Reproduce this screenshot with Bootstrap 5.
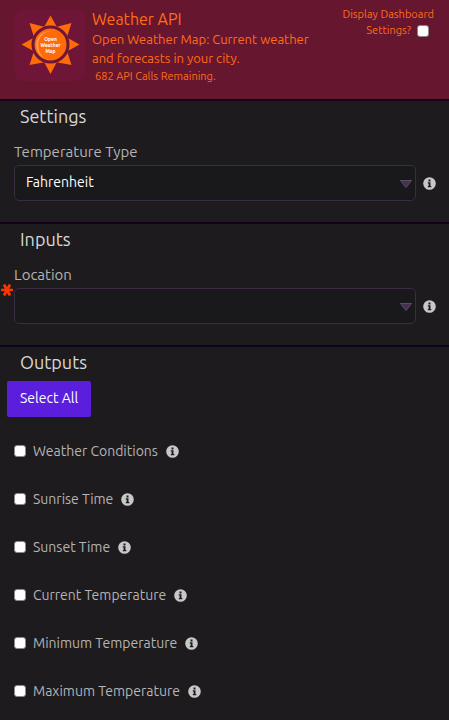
<!DOCTYPE html>
<html lang="en" data-bs-theme="dark">
<head>
<meta charset="utf-8">
<meta name="viewport" content="width=device-width, initial-scale=1">
<title>Weather API</title>
<link href="https://cdn.jsdelivr.net/npm/bootstrap@5.3.0/dist/css/bootstrap.min.css" rel="stylesheet">
<style>
body { font-family: Ubuntu, "Noto Sans", sans-serif; font-size: 14px; line-height: 20px; background: #1e1b1e; color: #b4b4b4; }
.api-head { background: #67162f; color: #ff6d14; padding: 9px 15px 14px 14px; column-gap: 7px; }
.api-logo { width: 71px; height: 71px; flex: none; border-radius: 9px; background: #6f1537; margin-top: 1px; }
.api-title { font-size: 16px; line-height: 20px; color: inherit; }
.api-desc { font-size: 13px; line-height: 19px; padding: 1px 16px 0 0; }
.api-calls { font-size: 11px; line-height: 17px; padding-left: 3px; }
.dash-toggle { font-size: 11px; line-height: 16px; margin-top: -3px; }
.dash-toggle .tick.form-check-input { margin: 0 5px 0 6px; }
.panel { border-top: 2px solid #12021c; }
.panel-title { font-size: 18px; line-height: 24px; color: #d8d8d8; padding: 3px 20px 0; }
.field { padding: 14px 14px 21px; }
.field-label { font-size: 15px; line-height: 20px; margin-bottom: 3px; }
.field-select { height: 36px; font-size: 14px; line-height: 20px; color: #fff; background-color: #19181a; border: 1px solid #3a2c42; border-radius: 5px; padding: 5px 28px 7px 11px;
  background-image: url("data:image/svg+xml,%3Csvg xmlns='http://www.w3.org/2000/svg' viewBox='0 0 12 8'%3E%3Cpath d='M.5.5h11L6 7.5z' fill='%23433052' stroke='%23706078' stroke-width='.7'/%3E%3C/svg%3E"); background-size: 12px 8px; background-position: right 3px top 14px; }
.field-row { column-gap: 7px; margin-right: -1px; }
.required-mark { left: 1px; top: 33px; width: 12px; height: 12px; }
.tick.form-check-input { width: 12px; height: 12px; margin: 0; flex: none; background-color: #fff; border: 1px solid #8b8789; border-radius: 3px; }
.tick.form-check-input:checked { background-color: #5a1edc; }
.info-dot { width: 13px; height: 13px; flex: none; }
.btn-all { font-size: 14px; line-height: 20px; padding: 7px 13px 9px; border-radius: 2px; background: #5a1edc; color: #fff; margin: 7px 7px 10px; }
.btn-all:hover { background: #6b34e4; color: #fff; }
.output-item { height: 48px; padding: 0 14px; column-gap: 7px; }
.output-item label { font-size: 14px; line-height: 20px; padding-right: 1px; }
</style>
<script src="https://cdn.jsdelivr.net/npm/bootstrap@5.3.0/dist/js/bootstrap.bundle.min.js"></script>
</head>
<body>
<svg class="d-none" aria-hidden="true">
  <symbol id="info" viewBox="0 0 13 13"><circle cx="6.5" cy="6.5" r="6.300" fill="#c8c8c8"/><path d="M5.500 2.500h2v2h-2zM4.800 5.300h2.700v3.800h.8v1.200H4.800V9.100h.8V6.500h-.8z" fill="#1e1b1e"/></symbol>
</svg>
<header class="api-head d-flex align-items-start">
  <svg class="api-logo" viewBox="0 0 71 71" role="img" aria-label="Open Weather Map">
    <g fill="#ff6b08">
      <path d="M36.500 5.500L44.500 20h-16z"/><path d="M36.500 64l8-15h-16z"/><path d="M7.500 34.500L22 26.500v16z"/><path d="M65.500 34.500L51 26.500v16z"/>
      <path d="M15.500 13L31 17 20 27z"/><path d="M57.500 13L42 17l11 10z"/><path d="M15.500 55L20 41l12 11z"/><path d="M57.500 55L53 41 41 52z"/>
    </g>
    <circle cx="36.500" cy="34.500" r="17.500" fill="#ff6b08" stroke="#6f1537" stroke-width="3"/>
    <path d="M29 47.500A15 15 0 0 1 24 28Q28 21 37 21Q28 22 25 30Q22 39 29 47.500" fill="#ff9c5c"/>
    <g fill="#fff" font-family="Ubuntu, Noto Sans, sans-serif" font-weight="700" font-size="5" text-anchor="middle"><text x="36.500" y="31">Open</text><text x="36.500" y="36.500">Weather</text><text x="36.500" y="42.500">Map</text></g>
  </svg>
  <div class="flex-grow-1">
    <h1 class="api-title fw-normal mb-0">Weather API</h1>
    <p class="api-desc mb-0">Open Weather Map: Current weather and forecasts in your city.</p>
    <p class="api-calls mb-0">682 API Calls Remaining.</p>
  </div>
  <div class="dash-toggle text-end flex-shrink-0">
    <label class="d-inline" for="dash">Display Dashboard<br>Settings?</label><input class="tick form-check-input align-middle" type="checkbox" id="dash">
  </div>
</header>
<main>
  <section class="panel">
    <h2 class="panel-title fw-normal mb-0">Settings</h2>
    <div class="field">
      <label class="field-label d-block" for="temp">Temperature Type</label>
      <div class="field-row d-flex align-items-center">
        <select class="field-select form-select" id="temp"><option>Fahrenheit</option><option>Celsius</option></select>
        <svg class="info-dot"><use href="#info"/></svg>
      </div>
    </div>
  </section>
  <section class="panel">
    <h2 class="panel-title fw-normal mb-0">Inputs</h2>
    <div class="field position-relative">
      <label class="field-label d-block" for="loc">Location</label>
      <svg class="required-mark position-absolute" viewBox="0 0 12 12" aria-hidden="true"><path d="M0 6h12M3 .5l6 11M9 .5L3 11.500" stroke="#ff3500" stroke-width="2.700"/></svg>
      <div class="field-row d-flex align-items-center">
        <select class="field-select form-select" id="loc" required><option value=""></option></select>
        <svg class="info-dot"><use href="#info"/></svg>
      </div>
    </div>
  </section>
  <section class="panel">
    <h2 class="panel-title fw-normal mb-0">Outputs</h2>
    <button class="btn btn-all border-0" type="button">Select All</button>
    <div class="output-item d-flex align-items-center"><input class="tick form-check-input" type="checkbox" id="o1"><label for="o1">Weather Conditions</label><svg class="info-dot"><use href="#info"/></svg></div>
    <div class="output-item d-flex align-items-center"><input class="tick form-check-input" type="checkbox" id="o2"><label for="o2">Sunrise Time</label><svg class="info-dot"><use href="#info"/></svg></div>
    <div class="output-item d-flex align-items-center"><input class="tick form-check-input" type="checkbox" id="o3"><label for="o3">Sunset Time</label><svg class="info-dot"><use href="#info"/></svg></div>
    <div class="output-item d-flex align-items-center"><input class="tick form-check-input" type="checkbox" id="o4"><label for="o4">Current Temperature</label><svg class="info-dot"><use href="#info"/></svg></div>
    <div class="output-item d-flex align-items-center"><input class="tick form-check-input" type="checkbox" id="o5"><label for="o5">Minimum Temperature</label><svg class="info-dot"><use href="#info"/></svg></div>
    <div class="output-item d-flex align-items-center"><input class="tick form-check-input" type="checkbox" id="o6"><label for="o6">Maximum Temperature</label><svg class="info-dot"><use href="#info"/></svg></div>
  </section>
</main>
</body>
</html>
